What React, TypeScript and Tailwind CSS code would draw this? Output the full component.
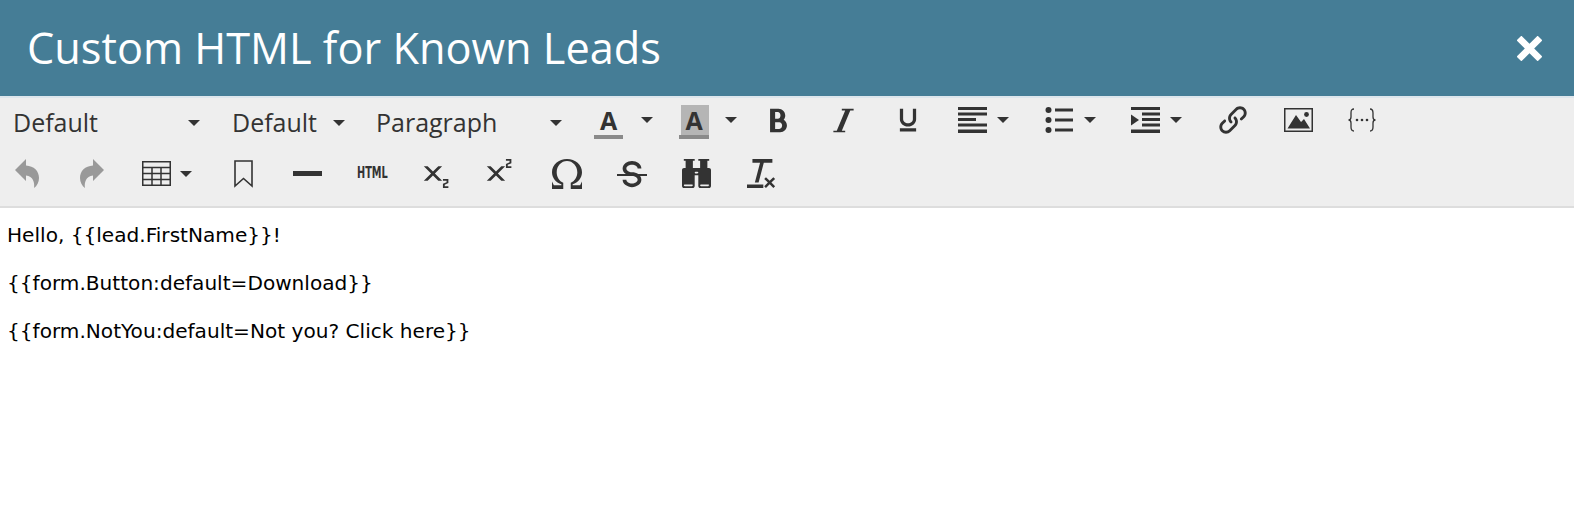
import { ImBold, ImItalic, ImUnderline, ImStrikethrough, ImOmega, ImBinoculars, ImClearFormatting, ImSubscript, ImSuperscript, ImLink, ImCross } from 'react-icons/im';

function Caret({ className = '' }: { className?: string }) {
  return <span className={`block h-0 w-0 border-x-[6px] border-t-[6px] border-x-transparent border-t-[#333] ${className}`} />;
}

function AlignIcon() {
  return (
    <svg width="29" height="26" viewBox="0 0 29 26" fill="#333" className="ml-[37px]">
      <rect y="0" width="29" height="3" />
      <rect y="5.5" width="29" height="3" />
      <rect y="11" width="18" height="3" />
      <rect y="16.5" width="29" height="3" />
      <rect y="22.5" width="29" height="3.5" />
    </svg>
  );
}

function ListIcon() {
  return (
    <svg width="29" height="26" viewBox="0 0 29 26" fill="#333" className="ml-[36px]">
      <circle cx="3.5" cy="3" r="3" />
      <circle cx="3.5" cy="13" r="3" />
      <circle cx="3.5" cy="23" r="3" />
      <rect x="10" y="1.5" width="18" height="3" />
      <rect x="10" y="11.5" width="18" height="3" />
      <rect x="10" y="21.5" width="18" height="3" />
    </svg>
  );
}

function IndentIcon() {
  return (
    <svg width="29" height="26" viewBox="0 0 29 26" fill="#333" className="ml-[35px]">
      <rect width="29" height="3" />
      <rect x="11" y="5.5" width="18" height="3" />
      <rect x="11" y="11" width="18" height="3" />
      <rect x="11" y="16.5" width="18" height="3" />
      <rect y="22.5" width="29" height="3.5" />
      <path d="M0 7.5 8 13 0 18.5Z" />
    </svg>
  );
}

function ImageIcon() {
  return (
    <svg width="29" height="24" viewBox="0 0 29 24" className="ml-[37px]">
      <rect x="0.75" y="0.75" width="27.5" height="22.5" fill="none" stroke="#333" strokeWidth="1.5" />
      <path d="M3.5 20.5 12 7l5 7 3-3 6 9.5Z" fill="#333" />
      <circle cx="22.5" cy="6.5" r="2.4" fill="#333" />
    </svg>
  );
}

function VariableIcon() {
  return (
    <svg width="28" height="24" viewBox="0 0 28 24" fill="none" stroke="#333" strokeWidth="1.3" className="ml-[35px]">
      <path d="M6 1C3 1 3 3 3 5v4c0 2-1 3-2.5 3C2 12 3 13 3 15v4c0 2 0 4 3 4" />
      <path d="M22 1c3 0 3 2 3 4v4c0 2 1 3 2.5 3-1.500 0-2.500 1-2.500 3v4c0 2 0 4-3 4" />
      <circle cx="9" cy="12" r="1.300" fill="#333" stroke="none" />
      <circle cx="14" cy="12" r="1.300" fill="#333" stroke="none" />
      <circle cx="19" cy="12" r="1.300" fill="#333" stroke="none" />
    </svg>
  );
}

function TableIcon() {
  return (
    <svg width="29" height="25" viewBox="0 0 29 25" fill="none" stroke="#333" strokeWidth="1.5">
      <rect x="0.75" y="0.75" width="27.5" height="23.5" />
      <path d="M0 6.500h29M0 12.500h29M0 18.500h29M10 6v19M19 6v19" />
    </svg>
  );
}

function BookmarkIcon() {
  return (
    <svg width="19" height="28" viewBox="0 0 19 28" fill="none" stroke="#333" strokeWidth="1.6" className="ml-[42px]">
      <path d="M1 1h17v25l-8.500-7.500L1 26Z" />
    </svg>
  );
}

function UndoIcon({ flip, className = '' }: { flip?: boolean; className?: string }) {
  return (
    <svg width="24" height="29" viewBox="0 0 24 29" fill="#999" className={`${flip ? '-scale-x-100' : ''} ${className}`}>
      <path d="M0 11 11 0v6.500C19 7 24 12 24 19c0 4-2 8-5 10 1-5-1-12-8-12.500V22Z" />
    </svg>
  );
}

function ColorA({ highlight }: { highlight?: boolean }) {
  return (
    <div className={`relative mt-[3px] flex h-[34px] justify-center ${highlight ? 'ml-[26px] w-[30px]' : 'ml-[32px] w-[29px]'}`}>
      {highlight && <span className="absolute top-0 right-0 h-[30px] w-[28px] bg-[#b5b5b5]" />}
      <span className="relative font-['Open_Sans'] text-[25px] font-bold leading-[30px] text-[#333]">A</span>
      <span className="absolute bottom-0 left-0 h-[4px] w-full bg-[#8a8a8a]" />
    </div>
  );
}

export default function App() {
  return (
    <div className="h-[506px] w-[1574px] overflow-hidden bg-white">
      {/* Header */}
      <div className="flex h-[96px] items-center justify-between bg-[#457d96] pr-[32px] pl-[27px]">
        <h1 className="font-['Open_Sans'] text-[43.300px] leading-none text-white">Custom HTML for Known Leads</h1>
        <ImCross size={25} color="#fff" />
      </div>

      {/* Toolbar */}
      <div className="h-[112px] border-t-2 border-b-2 border-t-[#dde6ec] border-b-[#dddddd] bg-[#eeeeee] font-['Open_Sans'] text-[25px] text-[#333]">
        <div className="flex h-[46px] items-center pb-[2px] pl-[13px]">
          <div className="flex w-[187px] items-center justify-between pt-[6px]">
            <span>Default</span>
            <Caret />
          </div>
          <div className="ml-[32px] flex w-[113px] items-center justify-between pt-[6px]">
            <span>Default</span>
            <Caret />
          </div>
          <div className="ml-[31px] flex w-[186px] items-center justify-between pt-[6px]">
            <span>Paragraph</span>
            <Caret />
          </div>
          <ColorA />
          <Caret className="ml-[18px]" />
          <ColorA highlight />
          <Caret className="ml-[16px]" />
          <ImBold size={27} className="ml-[28px]" />
          <ImItalic size={27} className="ml-[38px]" />
          <ImUnderline size={26} className="ml-[38px]" />
          <AlignIcon />
          <Caret className="ml-[10px]" />
          <ListIcon />
          <Caret className="ml-[10px]" />
          <IndentIcon />
          <Caret className="ml-[10px]" />
          <ImLink size={28} className="ml-[37px]" />
          <ImageIcon />
          <VariableIcon />
        </div>

        <div className="flex h-[62px] items-center pb-[3px] pl-[15px]">
          <UndoIcon />
          <UndoIcon flip className="ml-[41px]" />
          <div className="ml-[38px]">
            <TableIcon />
          </div>
          <Caret className="ml-[9px]" />
          <BookmarkIcon />
          <span className="ml-[40px] h-[5px] w-[29px] bg-[#333]" />
          <span className="ml-[35px] w-[30px] origin-left scale-x-[0.65] font-['DejaVu_Sans'] text-[15px] font-bold">HTML</span>
          <ImSubscript size={29} className="ml-[36px]" />
          <ImSuperscript size={29} className="ml-[34px]" />
          <ImOmega size={30} className="ml-[37px]" />
          <ImStrikethrough size={30} className="ml-[35px]" />
          <ImBinoculars size={29} className="ml-[35px]" />
          <ImClearFormatting size={29} className="ml-[36px]" />
        </div>
      </div>

      {/* Body */}
      <div className="space-y-[24px] px-[7px] pt-[15px] font-['DejaVu_Sans'] text-[20.100px] leading-[24px] text-black">
        <p>Hello, {'{{lead.FirstName}}'}!</p>
        <p>{'{{form.Button:default=Download}}'}</p>
        <p>{'{{form.NotYou:default=Not you? Click here}}'}</p>
      </div>
    </div>
  );
}
